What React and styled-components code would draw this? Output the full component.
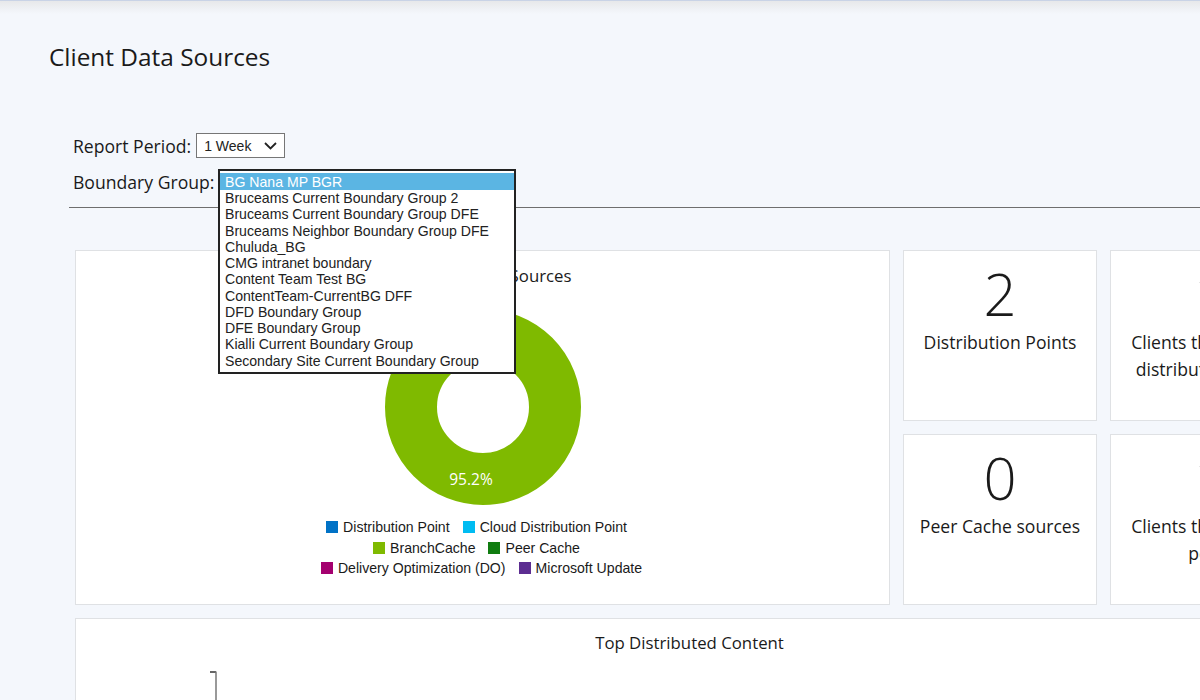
import React from 'react';
import styled, { createGlobalStyle } from 'styled-components';

const GlobalStyle = createGlobalStyle`
  html, body {
    margin: 0;
    padding: 0;
    width: 1200px;
    height: 700px;
    overflow: hidden;
    background: #f4f7fc;
    font-family: "Open Sans", "Noto Sans", sans-serif;
    color: #1a1a1a;
  }
  * { box-sizing: border-box; }
`;

const TopShadow = styled.div`
  height: 14px;
  border-top: 1px solid #c9d3e6;
  background: linear-gradient(#e7e8ea, #f4f7fc);
`;

const Page = styled.div`
  width: 1400px;
  height: 700px;
  overflow: hidden;
`;

const Title = styled.h1`
  margin: 0;
  padding: 26px 0 0 49px;
  height: 105px;
  font-size: 24.4px;
  line-height: 34px;
  font-weight: 400;
`;

const Filters = styled.div`
  margin-left: 69px;
  padding: 14px 0 13px 4px;
  border-bottom: 1px solid #6e6e6e;
  display: flex;
  flex-direction: column;
  gap: 11px;
`;

const FilterRow = styled.div`
  position: relative;
  display: flex;
  align-items: center;
  gap: 5px;
  height: 25px;
  font-size: 17.6px;
`;

const PeriodSelect = styled.div`
  width: 89px;
  height: 25px;
  padding: 0 7px;
  background: #fff;
  border: 1px solid #767676;
  display: flex;
  align-items: center;
  justify-content: space-between;
  font-family: "Liberation Sans", Arial, sans-serif;
  font-size: 14px;
  color: #222;
`;

const ListBox = styled.div`
  position: absolute;
  left: 145px;
  top: 0;
  z-index: 5;
  width: 298px;
  height: 205px;
  padding: 2px 0 0;
  background: #fff;
  border: 2px solid #222;
  font-family: "Liberation Sans", Arial, sans-serif;
  font-size: 14.1px;
  color: #222;
`;

const ListItem = styled.div`
  height: ${({ $selected }) => ($selected ? '17px' : '16.27px')};
  line-height: ${({ $selected }) => ($selected ? '18px' : '16.27px')};
  padding-left: 5px;
  white-space: nowrap;
  background: ${({ $selected }) => ($selected ? '#5bb5e3' : 'transparent')};
  color: ${({ $selected }) => ($selected ? '#fff' : '#222')};
`;

const Board = styled.div`
  margin: 42px 0 0 75px;
  width: 1229px;
  display: grid;
  grid-template-columns: 815px 194px 194px;
  grid-template-rows: 171px 171px 200px;
  gap: 13px;
`;

const Card = styled.div`
  background: #fff;
  border: 1px solid #dfe1e4;
  text-align: center;
`;

const ChartCard = styled(Card)`
  grid-row: span 2;
  padding-top: 13px;
  display: flex;
  flex-direction: column;
  align-items: center;
`;

const WideCard = styled(Card)`
  grid-column: span 3;
  padding-top: 12px;
`;

const CardTitle = styled.div`
  font-size: 16.8px;
  line-height: 24px;
`;

const Donut = styled.svg`
  display: block;
  margin-top: 21px;
`;

const Legend = styled.div`
  margin-top: 12px;
  font-family: "Liberation Sans", Arial, sans-serif;
  font-size: 14.1px;
  color: #1a1a1a;
`;

const LegendRow = styled.div`
  display: flex;
  justify-content: center;
  gap: 13px;
  height: 20.5px;
  align-items: center;
  padding-right: ${({ $inset }) => $inset}px;
`;

const LegendItem = styled.span`
  display: flex;
  align-items: center;
  gap: 5px;
`;

const Swatch = styled.i`
  width: 12px;
  height: 12px;
  background: ${({ $color }) => $color};
`;

const StatCard = styled(Card)`
  padding: 9px 8px 0;
`;

const StatValue = styled.div`
  font-size: 58px;
  line-height: 68px;
  font-weight: 300;
  padding-left: ${({ $indent }) => $indent || 0}px;
`;

const StatLabel = styled.div`
  font-size: 17.6px;
  line-height: 27px;
  margin-top: 1px;
`;

const AxisChart = styled.svg`
  display: block;
  margin-top: 5px;
`;

const boundaryGroups = [
  'BG Nana MP BGR',
  'Bruceams Current Boundary Group 2',
  'Bruceams Current Boundary Group DFE',
  'Bruceams Neighbor Boundary Group DFE',
  'Chuluda_BG',
  'CMG intranet boundary',
  'Content Team Test BG',
  'ContentTeam-CurrentBG DFF',
  'DFD Boundary Group',
  'DFE Boundary Group',
  'Kialli Current Boundary Group',
  'Secondary Site Current Boundary Group',
];

const legendRows = [
  { inset: 12, items: [['Distribution Point', '#0072c6'], ['Cloud Distribution Point', '#00bcf2']] },
  { inset: 12, items: [['BranchCache', '#7fba00'], ['Peer Cache', '#107c10']] },
  { inset: 2, items: [['Delivery Optimization (DO)', '#a4006f'], ['Microsoft Update', '#5c2d91']] },
];

const stats = [
  { value: '2', label: 'Distribution Points' },
  { value: '1', label: 'Clients that used a distribution point', indent: 7 },
  { value: '0', label: 'Peer Cache sources' },
  { value: '1', label: 'Clients that used a peer', indent: 7 },
];

const App = () => (
  <Page>
    <GlobalStyle />
    <TopShadow />
    <Title>Client Data Sources</Title>
    <Filters>
      <FilterRow>
        Report Period:
        <PeriodSelect>
          1 Week
          <svg width="13" height="8" viewBox="0 0 13 8" fill="none" stroke="#222" strokeWidth="1.8">
            <path d="M1 1l5.500 5.500L12 1" />
          </svg>
        </PeriodSelect>
      </FilterRow>
      <FilterRow>
        Boundary Group:
        <ListBox>
          {boundaryGroups.map((name, i) => (
            <ListItem key={name} $selected={i === 0}>{name}</ListItem>
          ))}
        </ListBox>
      </FilterRow>
    </Filters>
    <Board>
      <ChartCard>
        <CardTitle>Client Content Sources</CardTitle>
        <Donut width="196" height="196" viewBox="0 0 196 196">
          <circle cx="98" cy="98" r="72" fill="none" stroke="#7fba00" strokeWidth="52" />
          <text x="86" y="176" fill="#fff" fontSize="15.500" textAnchor="middle" fontFamily="'Open Sans', sans-serif">95.2%</text>
        </Donut>
        <Legend>
          {legendRows.map((row) => (
            <LegendRow key={row.items[0][0]} $inset={row.inset}>
              {row.items.map(([label, color]) => (
                <LegendItem key={label}>
                  <Swatch $color={color} />
                  {label}
                </LegendItem>
              ))}
            </LegendRow>
          ))}
        </Legend>
      </ChartCard>
      {stats.map(({ value, label, indent }) => (
        <StatCard key={label}>
          <StatValue $indent={indent}>{value}</StatValue>
          <StatLabel>{label}</StatLabel>
        </StatCard>
      ))}
      <WideCard>
        <CardTitle>Top Distributed Content</CardTitle>
        <AxisChart width="400" height="60" viewBox="0 0 400 60">
          <path d="M134 12h6" fill="none" stroke="#333" strokeWidth="1.500" />
          <path d="M140 11.500v49" fill="none" stroke="#777" strokeWidth="1.500" />
        </AxisChart>
      </WideCard>
    </Board>
  </Page>
);

export default App;
